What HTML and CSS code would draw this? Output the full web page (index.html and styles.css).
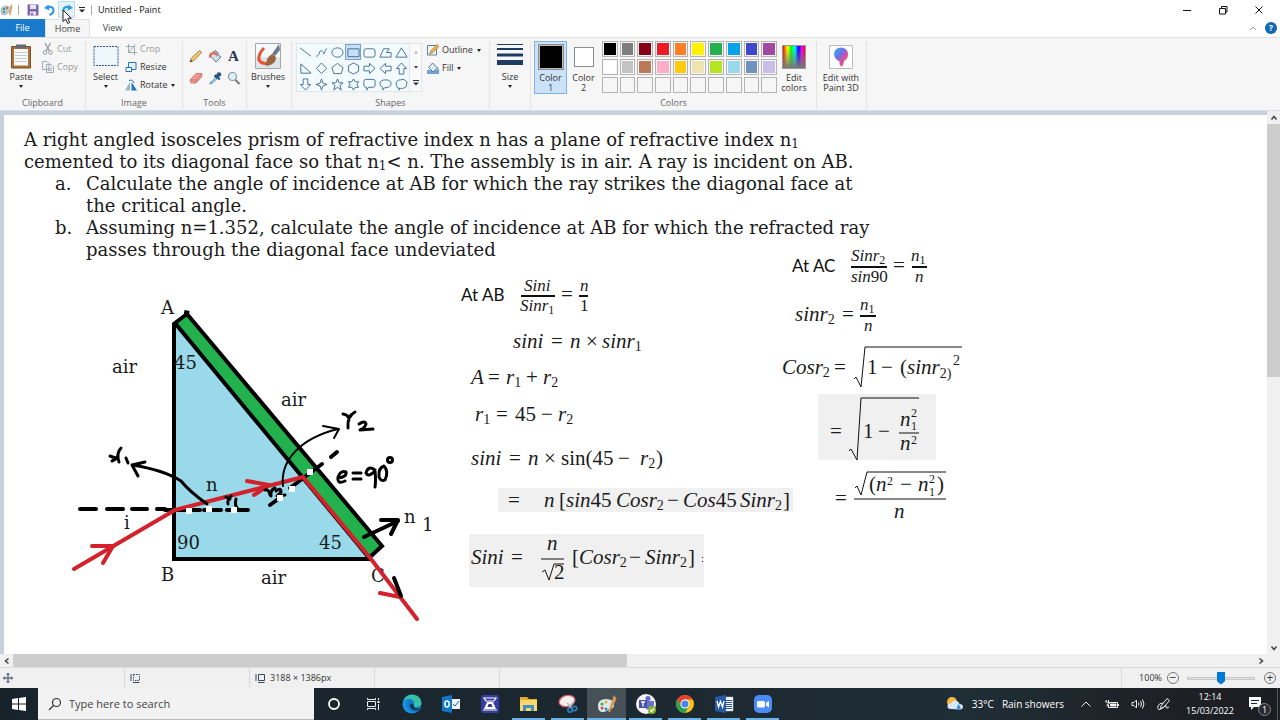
FILE: index.html
```html
<!DOCTYPE html>
<html lang="en">
<head>
<meta charset="utf-8">
<title>Untitled - Paint</title>
<link rel="stylesheet" href="styles.css">
</head>
<body>
<header class="titlebar">
  <svg class="app-icon" viewBox="0 0 14 14"><path d="M1 8Q1 3 6 3Q11 3 11 7Q11 10 8 9Q7 12 4 12Q1 12 1 8Z" fill="#b9cdd4" stroke="#8aa5b0" stroke-width=".6"/><circle cx="4" cy="6" r="1.2" fill="#3aa04a"/><circle cx="7" cy="5" r="1.1" fill="#d84b3a"/><circle cx="4" cy="9" r="1.1" fill="#3b7fd0"/><path d="M11 1L12.500 3L10.500 12L9 12Z" fill="#e0a050"/></svg>
  <span class="bar"></span>
  <button class="qa" aria-label="Save"><svg viewBox="0 0 12 12"><path d="M.5.500H11.500V11.500H.5Z" fill="#7f67ab"/><path d="M3 1H9V5H3ZM3 7.500H9V11H3Z" fill="#e9e4f4"/><path d="M4 9H6V11H4Z" fill="#7f67ab"/></svg></button>
  <button class="qa" aria-label="Undo"><svg viewBox="0 0 12 12"><path d="M3 3.500Q9.500 1.500 9.500 6.500Q9.500 9.500 5.500 11" fill="none" stroke="#2f9be0" stroke-width="2.200"/><path d="M0 4L4.500 .500L5.500 6.500Z" fill="#2f9be0"/></svg></button>
  <button class="qa hot" aria-label="Redo"><svg viewBox="0 0 12 12"><path d="M9 3.500Q2.500 1.500 2.500 6.500Q2.500 9.500 6.500 11" fill="none" stroke="#2f9be0" stroke-width="2.200"/><path d="M12 4L7.500 .500L6.500 6.500Z" fill="#2f9be0"/></svg></button>
  <button class="qa more" aria-label="Customize toolbar"><svg viewBox="0 0 6 6"><path d="M0 .5H6" stroke="#222"/><path d="M0 2.500H6L3 5.500Z" fill="#222"/></svg></button>
  <span class="bar"></span>
  <h1 class="title">Untitled - Paint</h1>
  <div class="window-buttons">
    <button aria-label="Minimize"><svg viewBox="0 0 10 10"><path d="M1 5.500H9" stroke="#111"/></svg></button>
    <button aria-label="Restore"><svg viewBox="0 0 10 10"><path d="M1.500 3.500H7.500V9H1.500ZM3.500 3V1.500H9V7H7.500" fill="none" stroke="#111"/></svg></button>
    <button aria-label="Close"><svg viewBox="0 0 10 10"><path d="M1.500 1.500L8.500 8.500M8.500 1.500L1.500 8.500" stroke="#111"/></svg></button>
  </div>
  <svg class="cursor" viewBox="0 0 11 16"><path d="M1 1V12.500L3.700 10L5.700 14.500L7.700 13.500L5.800 9.300H9.300Z" fill="#fff" stroke="#222"/></svg>
</header>

<nav class="tabs">
  <button class="tab file">File</button>
  <button class="tab current">Home</button>
  <button class="tab">View</button>
  <div class="tabs-end">
    <svg viewBox="0 0 8 6"><path d="M1 5L4 2L7 5" fill="none" stroke="#999"/></svg>
    <button class="help" aria-label="Help">?</button>
  </div>
</nav>

<section class="ribbon">
  <div class="group g-clipboard">
    <div class="tools">
      <button class="big"><svg viewBox="0 0 26 26"><path d="M3.500 3.500H22.500V25H3.500Z" fill="#a87238" stroke="#75502b"/><path d="M6 6H20V22.500H6Z" fill="#f9f9f7"/><path d="M8 1.500H18V5.500H8Z" fill="#66696c"/><path d="M7 9.500H19M7 12.500H19M7 15.500H19M7 18.500H19" stroke="#c3cad0"/></svg>Paste<i class="drop"></i></button>
      <div class="small-list two">
        <button class="small off"><svg viewBox="0 0 12 12"><path d="M3 0L7.500 8M8.500 0L4 8" stroke="#8e99a6" stroke-width="1.300"/><circle cx="3" cy="9.500" r="1.800" fill="none" stroke="#8e99a6"/><circle cx="8.500" cy="9.500" r="1.800" fill="none" stroke="#8e99a6"/></svg>Cut</button>
        <button class="small off"><svg viewBox="0 0 12 12"><path d="M.5.500H5L7 2.500V8.500H.5ZM4.500 3.500H9L11.500 6V11.500H4.500Z" fill="#eef1f5" stroke="#a3adb8"/><path d="M6 7.500H10M6 9.500H10" stroke="#a3adb8"/></svg>Copy</button>
      </div>
    </div>
    <h2>Clipboard</h2>
  </div>
  <div class="group g-image">
    <div class="tools">
      <button class="big"><svg viewBox="0 0 26 26"><path d="M1 3.500H25V22.500H1Z" fill="#f0f7fc" stroke="#2b5a92" stroke-dasharray="2 1"/></svg>Select<i class="drop"></i></button>
      <div class="small-list">
        <button class="small off"><svg viewBox="0 0 12 12"><path d="M3.500 1V9.500H12M1 3.500H9.500V12M3.500 9.500L10.500 1.500" fill="none" stroke="#a0a8b2"/></svg>Crop</button>
        <button class="small"><svg viewBox="0 0 12 12"><path d="M3.500 1.500H11V8.500H3.500Z" fill="#e7f2fb" stroke="#2673b8"/><path d="M1 6.500H6.500V10.500H1Z" fill="#fff" stroke="#2673b8"/></svg>Resize</button>
        <button class="small"><svg viewBox="0 0 12 12"><path d="M5 3L5 11.500H0Z" fill="#9fb4c8"/><path d="M6.500 3L12 11.500H6.500Z" fill="#1878c4"/><path d="M4 1.500Q8 0 9 4" fill="none" stroke="#2673b8"/></svg>Rotate<i class="drop"></i></button>
      </div>
    </div>
    <h2>Image</h2>
  </div>
  <div class="group g-tools">
    <div class="tools tool-grid">
      <button aria-label="Pencil"><svg viewBox="0 0 14 14"><path d="M1 13L2.500 9L10.500 1.500L12.500 3.500L5 11.500Z" fill="#f3c968" stroke="#8b6a33" stroke-width=".8"/><path d="M1 13L1.800 10.800L3.300 12.300Z" fill="#333"/></svg></button>
      <button aria-label="Fill with color"><svg viewBox="0 0 14 14"><path d="M6 2L13 8L8 13L2.500 7Z" fill="#d5e1ea" stroke="#5f7c94"/><path d="M1 9Q0 3 6 3Q10 4 10 8Q6 4 3.500 6Q3 9 1 9Z" fill="#e06e55"/><path d="M7 1L11 5" stroke="#5f7c94"/></svg></button>
      <button class="letter" aria-label="Text">A</button>
      <button aria-label="Eraser"><svg viewBox="0 0 14 14"><path d="M1 9L7 2.500H13L12.500 6L7 12H2Z" fill="#ef9a95" stroke="#c86a68" stroke-width=".8"/><path d="M1 9H7L13 3M7 9V12" fill="none" stroke="#c86a68" stroke-width=".7"/></svg></button>
      <button aria-label="Color picker"><svg viewBox="0 0 14 14"><path d="M1.500 12.500L8 6L9.500 7.500L3 13Z" fill="#a7d2ef" stroke="#4c85ab" stroke-width=".8"/><path d="M6.500 4.500L8 3L11 6L12.500 8L11 9L5.800 5.500Z" fill="#23517e"/><circle cx="11" cy="3.500" r="2.200" fill="#23517e"/></svg></button>
      <button aria-label="Magnifier"><svg viewBox="0 0 14 14"><path d="M8.500 9L12.500 13" stroke="#777" stroke-width="2"/><circle cx="5.500" cy="5.500" r="4" fill="#dff0fb" stroke="#8a97a4" stroke-width="1.200"/></svg></button>
    </div>
    <h2>Tools</h2>
  </div>
  <div class="group g-brush">
    <div class="tools">
      <button class="big"><svg viewBox="0 0 26 26"><path d="M.5.500H25.500V25.500H.5Z" fill="#f7fafc" stroke="#a5a9ad"/><path d="M1 14H25V25H1Z" fill="#dde4ea"/><path d="M9 5Q3 11 4 17Q7 22 14 20" fill="none" stroke="#e4572c" stroke-width="3"/><path d="M24 1L17 11L20 13L25 7Z" fill="#6a7b90"/><path d="M17 11L21 14Q21 22 11 23Q11 14 17 11Z" fill="#9a643c"/></svg>Brushes<i class="drop"></i></button>
    </div>
  </div>
  <div class="group g-shapes">
    <div class="tools">
      <div class="shape-box">
        <div class="shape-grid">
          <button aria-label="Line"><svg viewBox="0 0 14 14"><path d="M1 2L13 11"/></svg></button>
          <button aria-label="Curve"><svg viewBox="0 0 14 14"><path d="M1 11C6 11 4 4 7 5S9 10 10 8S11 3 13 3"/></svg></button>
          <button aria-label="Oval"><svg viewBox="0 0 14 14"><ellipse cx="7" cy="7" rx="6" ry="5"/></svg></button>
          <button class="picked" aria-label="Rectangle"><svg viewBox="0 0 14 14"><path d="M1 3H13V11.500H1Z"/></svg></button>
          <button aria-label="Rounded rectangle"><svg viewBox="0 0 14 14"><rect x="1" y="3" width="12" height="9" rx="2.500"/></svg></button>
          <button aria-label="Polygon"><svg viewBox="0 0 14 14"><path d="M1 12L5 3H11L8 7H13V12Z"/></svg></button>
          <button aria-label="Triangle"><svg viewBox="0 0 14 14"><path d="M7 2L13 12H1Z"/></svg></button>
          <button aria-label="Right triangle"><svg viewBox="0 0 14 14"><path d="M2 2V12H13Z"/></svg></button>
          <button aria-label="Diamond"><svg viewBox="0 0 14 14"><path d="M7 1L12.500 7L7 12.500L1.500 7Z"/></svg></button>
          <button aria-label="Pentagon"><svg viewBox="0 0 14 14"><path d="M7 1.500L13 6L11 12.500H3L1 6Z"/></svg></button>
          <button aria-label="Hexagon"><svg viewBox="0 0 14 14"><path d="M7 1L12.500 4V10L7 13L1.500 10V4Z"/></svg></button>
          <button aria-label="Right arrow"><svg viewBox="0 0 14 14"><path d="M1 4.500H7V1.500L13 7L7 12.500V9.500H1Z"/></svg></button>
          <button aria-label="Left arrow"><svg viewBox="0 0 14 14"><path d="M13 4.500H7V1.500L1 7L7 12.500V9.500H13Z"/></svg></button>
          <button aria-label="Up arrow"><svg viewBox="0 0 14 14"><path d="M4.500 13V7H1.500L7 1L12.500 7H9.500V13Z"/></svg></button>
          <button aria-label="Down arrow"><svg viewBox="0 0 14 14"><path d="M4.500 1V7H1.500L7 13L12.500 7H9.500V1Z"/></svg></button>
          <button aria-label="Four-point star"><svg viewBox="0 0 14 14"><path d="M7 1L8.500 5.500L13 7L8.500 8.500L7 13L5.500 8.500L1 7L5.500 5.500Z"/></svg></button>
          <button aria-label="Five-point star"><svg viewBox="0 0 14 14"><path d="M7 1L8.700 5.200H13L9.600 8L11 13L7 10L3 13L4.400 8L1 5.200H5.300Z"/></svg></button>
          <button aria-label="Six-point star"><svg viewBox="0 0 14 14"><path d="M7 1L8.800 4H12.500L10.700 7L12.500 10H8.800L7 13L5.200 10H1.500L3.300 7L1.500 4H5.200Z"/></svg></button>
          <button aria-label="Rounded callout"><svg viewBox="0 0 14 14"><path d="M3 1.500H11Q13 1.500 13 3.500V8Q13 10 11 10H6L4 13V10H3Q1 10 1 8V3.500Q1 1.500 3 1.500Z"/></svg></button>
          <button aria-label="Oval callout"><svg viewBox="0 0 14 14"><path d="M4 13V10Q1 9 1 6Q1 2 7 2Q13 2 13 6Q13 10.500 6 10.500Z"/></svg></button>
          <button aria-label="Cloud callout"><svg viewBox="0 0 14 14"><path d="M4 13L5 11Q1 11 2 8Q0 6 2 4Q3 1.500 6 2Q9 .5 11 2.500Q14 4 12.500 7Q13 10 10 10.500Q8 12 6 11Z"/></svg></button>
        </div>
        <div class="shape-scroll">
          <button aria-label="Scroll up"><svg viewBox="0 0 6 6"><path d="M1 4.500H5L3 2Z" fill="#aaa"/></svg></button>
          <button aria-label="Scroll down"><svg viewBox="0 0 6 6"><path d="M1 2H5L3 4.500Z" fill="#333"/></svg></button>
          <button aria-label="All shapes"><svg viewBox="0 0 6 6"><path d="M0 .5H6" stroke="#333"/><path d="M0 2.500H6L3 5.500Z" fill="#333"/></svg></button>
        </div>
      </div>
      <div class="small-list two">
        <button class="small"><svg viewBox="0 0 12 12"><path d="M.5 1.500H9.500V11H.5Z" fill="#f4f8fb" stroke="#5d7f9d"/><path d="M2.500 10L4 6.500L10 .5L12 2.500L6 8.500Z" fill="#efb34f" stroke="#8b6a33" stroke-width=".6"/></svg>Outline<i class="drop"></i></button>
        <button class="small"><svg viewBox="0 0 12 12"><path d="M0 8H12V12H0Z" fill="#6fa3d4"/><path d="M5.500 1L10.500 6L6 10L1.500 5.500Z" fill="#dce9f3" stroke="#5d7f9d"/><path d="M10 5Q12.500 7 11 9Z" fill="#2f6aa5"/></svg>Fill<i class="drop"></i></button>
      </div>
    </div>
    <h2>Shapes</h2>
  </div>
  <div class="group g-size">
    <div class="tools">
      <button class="big"><svg viewBox="0 0 26 26"><path d="M0 1.500H26" stroke="#1f3c64"/><path d="M0 6H26" stroke="#1f3c64" stroke-width="2"/><path d="M0 12H26" stroke="#1f3c64" stroke-width="3"/><path d="M0 19.500H26" stroke="#1f3c64" stroke-width="5"/></svg>Size<i class="drop"></i></button>
    </div>
  </div>
  <div class="group g-colors">
    <div class="tools">
      <button class="color-pick chosen"><span class="well"><span class="swatch first"></span></span>Color<br>1</button>
      <button class="color-pick"><span class="well"><span class="swatch second"></span></span>Color<br>2</button>
      <div class="palette">
        <button class="black" aria-label="Black"></button><button class="gray" aria-label="Gray"></button><button class="maroon" aria-label="Dark red"></button><button class="red" aria-label="Red"></button><button class="orange" aria-label="Orange"></button><button class="yellow" aria-label="Yellow"></button><button class="green" aria-label="Green"></button><button class="turquoise" aria-label="Turquoise"></button><button class="indigo" aria-label="Indigo"></button><button class="purple" aria-label="Purple"></button>
        <button class="white" aria-label="White"></button><button class="silver" aria-label="Light gray"></button><button class="brown" aria-label="Brown"></button><button class="rose" aria-label="Rose"></button><button class="gold" aria-label="Gold"></button><button class="cream" aria-label="Light yellow"></button><button class="lime" aria-label="Lime"></button><button class="sky" aria-label="Light turquoise"></button><button class="slate" aria-label="Blue gray"></button><button class="lavender" aria-label="Lavender"></button>
        <button aria-label="Custom 1"></button><button aria-label="Custom 2"></button><button aria-label="Custom 3"></button><button aria-label="Custom 4"></button><button aria-label="Custom 5"></button><button aria-label="Custom 6"></button><button aria-label="Custom 7"></button><button aria-label="Custom 8"></button><button aria-label="Custom 9"></button><button aria-label="Custom 10"></button>
      </div>
      <button class="color-pick edit"><span class="well"><span class="rainbow"></span></span>Edit<br>colors</button>
    </div>
    <h2>Colors</h2>
  </div>
  <div class="group g-3d">
    <div class="tools">
      <button class="color-pick wide"><span class="well"><svg viewBox="0 0 24 24"><defs><linearGradient id="drop3d" x1="0" y1="0" x2="1" y2="1"><stop offset="0" stop-color="#25b8f0"/><stop offset=".4" stop-color="#6a73e6"/><stop offset=".65" stop-color="#e04aa0"/><stop offset="1" stop-color="#f7943c"/></linearGradient></defs><path d="M.5.500H23.500V23.500H.5Z" fill="#fff" stroke="#bbb"/><path d="M12 2.500Q19 3 19 9.500Q19 14 15 16Q14.500 21 12.500 21.500Q10.500 21 10.500 16.500Q5 14 5 9Q5.500 3 12 2.500Z" fill="url(#drop3d)"/></svg></span>Edit with<br>Paint 3D</button>
    </div>
  </div>
</section>

<main class="workspace">
  <div class="canvas">
    <article class="problem">
      <p>A right angled isosceles prism of refractive index n has a plane of refractive index n<small>1</small><br>cemented to its diagonal face so that n<small>1</small>&lt; n. The assembly is in air. A ray is incident on AB.</p>
      <ol>
        <li><span>Calculate the angle of incidence at AB for which the ray strikes the diagonal face at<br>the critical angle.</span></li>
        <li><span>Assuming n=1.352, calculate the angle of incidence at AB for which the refracted ray<br>passes through the diagonal face undeviated</span></li>
      </ol>
    </article>

    <svg class="drawing" width="3188" height="1386" viewBox="4 115 3188 1386">
      <g class="prism">
        <path d="M174 323V559H370Z"/>
        <path d="M175 323L187 314L382 546L369 559Z"/>
        <path d="M184 313L189 314"/>
        <path d="M187 314L175 323L370 559H174V323M187 314L382 546L369 558"/>
      </g>
      <g class="dashes">
        <path d="M80 509H96M107 509H123M132 509H147M157 509H165M165 510H200M204 510H221M227 510H248"/>
        <path d="M270 505L281 497M290 488L322 464M331 457L337 452"/>
      </g>
      <g class="label">
        <text x="161" y="314">A</text><text x="112" y="373">air</text><text x="174" y="369">45</text><text x="281" y="406">air</text>
        <text x="206" y="491">n</text><text x="124" y="529">i</text><text x="177" y="549">90</text><text x="319" y="549">45</text>
        <text x="161" y="581">B</text><text x="261" y="584">air</text><text x="371" y="582">C</text><text x="404" y="523">n</text><text x="422" y="531">1</text>
      </g>
      <g class="ray">
        <path d="M74 569L175 510L303 477L371 559L417 619"/>
        <path d="M92 546L113 546L103 563M247 481L269 485L254 495M380 593L400 597"/>
      </g>
      <g class="ink">
        <path d="M110 456L118 459M121 448Q116 453 119 462M112 461Q115 460 118 456M126 458L128 463"/>
        <path d="M145 462L132 465L138 476M132 465Q164 470 181 481Q190 492 207 504"/>
        <path d="M226 497L230 499M231 496Q227 500 228 504M236 499Q234 508 240 510"/>
        <path d="M265 490Q269 489 270 495M275 488Q270 490 271 496M276 491Q281 487 281 492L277 496L285 495"/>
        <path d="M283 486C280 460 301 438 338 429M323 426L339 429L334 438" stroke-width="2"/>
        <path d="M343 414Q349 415 349 420M355 412Q347 416 348 428M359 424Q365 420 366 424Q365 428 360 430L373 429"/>
        <path d="M338 478Q347 477 346 472Q341 470 338 477Q337 485 345 481M353 473H361M353 479H361M375 470Q368 465 366 473Q368 478 375 471Q376 481 375 487M384 466Q378 468 379 477Q381 482 385 480Q389 471 384 466Z"/>
        <circle cx="390" cy="460" r="2.500"/>
        <path d="M364 537L398 521M381 520H398L391 534M394 578L401 596" stroke-width="4"/>
      </g>
      <path class="handles" d="M186 508h6v6h-6ZM206 506h6v6h-6ZM231 507h6v6h-6ZM277 495h6v6h-6ZM289 486h6v6h-6ZM307 469h6v6h-6Z"/>

      <g class="patch"><path d="M498 488H793V512H498ZM469 534H704V587H469ZM818 394H936V460H818Z"/></g>
      <g class="plain"><text x="461" y="301">At AB</text><text x="792" y="272">At AC</text></g>

      <g class="math">
        <text class="frac" x="524" y="291">Sini</text><text class="frac" x="520" y="311">Sinr<tspan class="sub" dy="3">1</tspan></text><text x="561" y="301" class="op">=</text>
        <text class="frac" x="580" y="291">n</text><text class="frac up" x="580" y="311">1</text>

        <text x="513" y="348">sini</text><text class="op" x="551" y="348">=</text><text x="570" y="348">n</text><text class="op" x="586" y="348">×</text><text x="602" y="348">sinr<tspan class="sub" dy="3">1</tspan></text>

        <text x="471" y="384">A</text><text class="op" x="488" y="384">=</text><text x="506" y="384">r<tspan class="sub" dy="3">1</tspan></text><text class="op" x="526" y="384">+</text><text x="543" y="384">r<tspan class="sub" dy="3">2</tspan></text>

        <text x="475" y="421">r<tspan class="sub" dy="3">1</tspan></text><text class="op" x="496" y="421">=</text><text class="up" x="515" y="421">45</text><text class="op" x="541" y="421">−</text><text x="558" y="421">r<tspan class="sub" dy="3">2</tspan></text>

        <text x="471" y="465">sini</text><text class="op" x="509" y="465">=</text><text x="528" y="465">n</text><text class="op" x="544" y="465">×</text><text class="up" x="561" y="465">sin(45</text><text class="op" x="618" y="465">−</text><text x="640" y="465">r<tspan class="sub" dy="3">2</tspan></text><text class="up" x="656" y="465">)</text>

        <text class="op" x="508" y="507">=</text><text x="544" y="507">n</text><text x="559" y="507"><tspan class="up">[</tspan>sin<tspan class="up">45</tspan></text><text x="616" y="507">Cosr<tspan class="sub" dy="3">2</tspan></text><text class="op" x="667" y="507">−</text><text x="683" y="507">Cos<tspan class="up">45</tspan></text><text x="740" y="507">Sinr<tspan class="sub" dy="3">2</tspan></text><text class="up" x="783" y="507">]</text>

        <text x="471" y="564">Sini</text><text class="op" x="511" y="564">=</text><text x="547" y="550">n</text><text class="up" x="554" y="579">2</text><text class="up" x="572" y="564">[</text><text x="579" y="564">Cosr<tspan class="sub" dy="3">2</tspan></text><text class="op" x="629" y="564">−</text><text x="645" y="564">Sinr<tspan class="sub" dy="3">2</tspan></text><text class="up" x="688" y="564">]</text>

        <text class="frac" x="851" y="261">Sinr<tspan class="sub" dy="3">2</tspan></text><text class="frac" x="851" y="282">sin<tspan class="up">90</tspan></text><text class="op" x="893" y="272">=</text><text class="frac" x="911" y="261">n<tspan class="sub" dy="3">1</tspan></text><text class="frac" x="915" y="282">n</text>

        <text x="795" y="321">sinr<tspan class="sub" dy="3">2</tspan></text><text class="op" x="842" y="321">=</text><text class="frac" x="860" y="310">n<tspan class="sub" dy="3">1</tspan></text><text class="frac" x="864" y="331">n</text>

        <text x="782" y="374">Cosr<tspan class="sub" dy="3">2</tspan></text><text class="op" x="834" y="374">=</text><text class="up" x="867" y="374">1</text><text class="op" x="881" y="374">−</text><text x="900" y="374"><tspan class="up">(</tspan>sinr<tspan class="sub" dy="4">2)</tspan></text><text class="sub" x="953" y="365">2</text>

        <text class="op" x="830" y="438">=</text><text class="up" x="863" y="438">1</text><text class="op" x="878" y="438">−</text><text x="900" y="426">n</text><text class="tiny" x="911" y="417">2</text><text class="tiny" x="911" y="430">1</text><text x="900" y="450">n</text><text class="tiny" x="911" y="444">2</text>

        <text class="op" x="835" y="505">=</text><text class="up" x="869" y="491">(</text><text x="876" y="491">n</text><text class="tiny" x="887" y="485">2</text><text class="op" x="900" y="491">−</text><text x="918" y="491">n</text><text class="tiny" x="929" y="483">2</text><text class="tiny" x="929" y="496">1</text><text class="up" x="937" y="491">)</text><text x="894" y="518">n</text>
      </g>
      <g class="rules">
        <path d="M521 296H555M579 296H588M851 267H887M912 267H927M860 316H876" stroke-width="2"/>
        <path d="M541 559H564M899 433H919M854 499H946"/>
        <path d="M542 572L545 570L549 580L554 564H564M854 379L856 377L861 387L865 347H962M849 451L851 449L857 460L861 398H919M855 488L857 486L861 495L867 472H946M702.500 557V558M702.500 561V562"/>
      </g>
    </svg>
  </div>
  <div class="vscroll">
    <button aria-label="Scroll up"><svg viewBox="0 0 8 8"><path d="M1.500 5.500L4 2.500L6.500 5.500"/></svg></button>
    <div class="lane"><div class="thumb"></div></div>
    <button aria-label="Scroll down"><svg viewBox="0 0 8 8"><path d="M1.500 2.500L4 5.500L6.500 2.500"/></svg></button>
  </div>
  <div class="hscroll">
    <button aria-label="Scroll left"><svg viewBox="0 0 8 8"><path d="M5.500 1.500L2.500 4L5.500 6.500"/></svg></button>
    <div class="lane"><div class="thumb"></div></div>
    <button aria-label="Scroll right"><svg viewBox="0 0 8 8"><path d="M2.500 1.500L5.500 4L2.500 6.500"/></svg></button>
  </div>
</main>

<footer class="status">
  <div class="cell"><svg viewBox="0 0 10 10"><path d="M5 0V10M0 5H10M3.500 2L5 .5L6.500 2M3.500 8L5 9.500L6.500 8M2 3.500L.5 5L2 6.500M8 3.500L9.500 5L8 6.500"/></svg></div>
  <div class="cell"><svg viewBox="0 0 10 10"><path d="M3.500 1.500H9.500V7.500H3.500Z" stroke-dasharray="1.500 1"/><path d="M1 1V8M3 9.500H9.500"/></svg></div>
  <div class="cell"><svg viewBox="0 0 10 10"><path d="M3.500 1.500H9.500V7.500H3.500Z"/><path d="M1 1V8M3 9.500H9.500"/></svg>3188 × 1386px</div>
  <div class="cell"></div>
  <div class="zoom">
    <label for="zoom">100%</label>
    <button aria-label="Zoom out">−</button>
    <input id="zoom" type="range" min="0" max="100" value="50">
    <button aria-label="Zoom in">+</button>
  </div>
</footer>

<footer class="taskbar">
  <button class="task start" aria-label="Start"><svg viewBox="0 0 14 14"><path d="M0 2L6 1V6.500H0ZM7 1L14 0V6.500H7ZM0 7.500H6V13L0 12ZM7 7.500H14V14L7 13Z" fill="#fff"/></svg></button>
  <label class="search"><svg viewBox="0 0 14 14"><circle cx="8.500" cy="5.500" r="4" fill="none" stroke="#333" stroke-width="1.200"/><path d="M5.500 8.500L1 13" stroke="#333" stroke-width="1.200"/></svg><input type="text" placeholder="Type here to search" aria-label="Search"></label>
  <button class="task" aria-label="Cortana"><svg viewBox="0 0 20 20"><circle cx="10" cy="10" r="5" fill="none" stroke="#fff" stroke-width="1.800"/></svg></button>
  <button class="task" aria-label="Task view"><svg viewBox="0 0 20 20"><path d="M4.500 7.500H12.500V12.500H4.500ZM4.500 4V5.500H12.500V4M4.500 16V14.500H12.500V16M15.500 4V6M15.500 10V16" fill="none" stroke="#eee"/><path d="M14.500 7H16.500V9H14.500Z" fill="#fff"/></svg></button>
  <button class="task" aria-label="Edge"><svg viewBox="0 0 20 20"><circle cx="10" cy="10" r="9.500" fill="#1878c8"/><path d="M1 8Q3 .5 10 .5Q19 1 19.500 9Q19 13 14.500 13Q11.500 13 12 11Q13 6 8 5Q3 4 1 8Z" fill="#35c1a5"/><path d="M1 8Q3 4 8 5Q3 7 5 13Q7 18 13 18Q6 21 2 15Q0 11 1 8Z" fill="#1595e0"/><path d="M12 11Q8 8 8 12Q9 17 16 16Q18 15 18.500 14Q16 15 13 14Q11 13 12 11Z" fill="#14344e"/></svg></button>
  <button class="task" aria-label="Outlook"><svg viewBox="0 0 20 20"><path d="M10 5H19V15H10Z" fill="#eef5fb"/><path d="M12 10L14 12L18 7" fill="none" stroke="#0f6cbd"/><path d="M1 3L11 1V19L1 17Z" fill="#0f78c8"/><ellipse cx="6" cy="10" rx="2.200" ry="3" fill="none" stroke="#fff" stroke-width="1.500"/></svg></button>
  <button class="task" aria-label="Scanner"><svg viewBox="0 0 20 20"><rect x="1" y="1" width="18" height="18" rx="2" fill="#343da0"/><path d="M4 4H16L14 7H6Z" fill="#343da0" stroke="#fff" stroke-width="1.200"/><path d="M7 8H13L16 15H4Z" fill="#fff"/><path d="M8.500 10H11.500L12.500 13H7.500Z" fill="#343da0"/><path d="M3 16H17" stroke="#fff"/></svg></button>
  <button class="task open" aria-label="File Explorer"><svg viewBox="0 0 20 20"><path d="M1 3H8L10 5H18V17H1Z" fill="#e8aa32"/><path d="M1 6H18V17H1Z" fill="#fbd769"/><path d="M4 11H15V17H12V14H7V17H4Z" fill="#3f8fc5"/></svg></button>
  <button class="task open" aria-label="Snipping Tool"><svg viewBox="0 0 20 20"><ellipse cx="9" cy="7" rx="8" ry="5.500" fill="#f8eeee" stroke="#d7626b" stroke-width="1.300" transform="rotate(-15 9 7)"/><path d="M9 9L14 14M16 7L11 14" stroke="#b8bdc2" stroke-width="1.500"/><circle cx="12" cy="16" r="2.200" fill="none" stroke="#2c86c2" stroke-width="1.500"/><circle cx="16.500" cy="14.500" r="2.200" fill="none" stroke="#2c86c2" stroke-width="1.500"/></svg></button>
  <button class="task open active" aria-label="Paint"><svg viewBox="0 0 20 20"><path d="M1 12Q1 5 9 5Q17 5 17 11Q17 15 13 14Q10 18 6 18Q1 18 1 12Z" fill="#d9e9ee"/><circle cx="5" cy="10" r="1.600" fill="#49aa4a"/><circle cx="9" cy="8" r="1.500" fill="#e2ad32"/><circle cx="5" cy="14" r="1.500" fill="#d74b43"/><circle cx="9" cy="15" r="1.500" fill="#3488c7"/><path d="M17 1L19.500 5L13 18L11 18Z" fill="#d99a54"/></svg></button>
  <button class="task open" aria-label="Teams"><svg viewBox="0 0 20 20"><circle cx="10" cy="10" r="10" fill="#f4f4fa"/><circle cx="12" cy="4.500" r="2.500" fill="#6269c4"/><path d="M9 7H18V14Q15 17 10 15Z" fill="#6b72cc"/><path d="M3 6H11V14H3Z" fill="#4950a8"/><path d="M5 8H9M7 8V12.500" stroke="#fff" stroke-width="1.300"/><circle cx="16" cy="16" r="4" fill="#83b72b"/><path d="M14 16L15.500 17.500L18 14.500" fill="none" stroke="#fff" stroke-width="1.200"/></svg></button>
  <button class="task open" aria-label="Chrome"><svg viewBox="0 0 20 20"><circle cx="10" cy="10" r="9" fill="#fbc116"/><path d="M10 5.500H17.800A9 9 0 0 0 2.200 5.500L6 12Z" fill="#e34133"/><path d="M2.200 5.500A9 9 0 0 0 10 19L14 12.500L10 14L6 12Z" fill="#2ca04e"/><circle cx="10" cy="10" r="4.500" fill="#fff"/><circle cx="10" cy="10" r="3.500" fill="#4285f4"/></svg></button>
  <button class="task open" aria-label="Word"><svg viewBox="0 0 20 20"><path d="M10 3H19V17H10Z" fill="#f3f6fa" stroke="#b8c8df" stroke-width=".5"/><path d="M12 6.500H18M12 8.500H18M12 10.500H18M12 12.500H18M12 14.500H18" stroke="#2b579a"/><path d="M1 3L12 1V19L1 17Z" fill="#2b5aa8"/><path d="M3 7L4.500 13L6.500 7.500L8.500 13L10 7" fill="none" stroke="#fff" stroke-width="1.300"/></svg></button>
  <button class="task open" aria-label="Zoom"><svg viewBox="0 0 20 20"><rect x="1" y="1" width="18" height="18" rx="5" fill="#4a8cf7"/><rect x="4" y="7" width="8" height="6.500" rx="1.500" fill="#fff"/><path d="M13 9L16 7V13.500L13 11.500Z" fill="#fff"/></svg></button>
  <div class="tray">
    <button class="weather"><svg viewBox="0 0 18 16"><circle cx="6" cy="6" r="5" fill="#f5b83d"/><path d="M5 13Q1 13 1.500 9.500Q2 7 5 7.500Q7 3.500 11 5Q13 6 13.500 8Q17 8 17 11Q16.500 13.500 14 13.500Z" fill="#d5e8fa"/><path d="M12.500 8Q15.500 11.500 14 13.500Q12 15 11 13Q10.500 11 12.500 8Z" fill="#3e93e0"/></svg><span>33°C</span><span>Rain showers</span></button>
    <button aria-label="Hidden icons"><svg viewBox="0 0 14 14"><path d="M2.500 9.500L7 5L11.500 9.500"/></svg></button>
    <button aria-label="Battery"><svg viewBox="0 0 14 14"><path d="M4 5.500H12.500V10.500H3.500V8M13.500 7V9M1 3V5M3.500 3V5M.5 5H4V7H2.300V9.500"/><path d="M5.500 7H11V9H5.500Z" fill="#fff"/></svg></button>
    <button aria-label="Volume"><svg viewBox="0 0 14 14"><path d="M1 5.500H3L5.500 3V11L3 8.500H1ZM7.500 5.500Q8.500 7 7.500 8.500M9.500 4Q11.500 7 9.500 10M11.500 2.500Q14.500 7 11.500 11.500"/></svg></button>
    <button aria-label="Pen"><svg viewBox="0 0 14 14"><path d="M4 9L10 1.500L12.500 3.500L6.500 10.500L3.500 11.500ZM6 6Q2 6 1 9Q0 13 3 12.500Q7 10 8 9Q10 8 9 10.500Q9 12 12 10"/></svg></button>
    <button class="clock"><time>12:14</time><time>15/03/2022</time></button>
    <button class="notes" aria-label="1 notification"><svg viewBox="0 0 18 18"><path d="M1 2H13V12H6L3 15V12H1Z" fill="#fff" stroke="none"/><path d="M3 5.500H11M3 8.500H9" stroke="#222"/></svg><span class="count">1</span></button>
  </div>
</footer>
</body>
</html>
```
FILE: styles.css
```css
* { box-sizing: border-box; }
body {
  margin: 0;
  height: 100vh;
  display: flex;
  flex-direction: column;
  overflow: hidden;
  font: 9px/10px "Open Sans", "Noto Sans", sans-serif;
  color: #333;
  background: #fff;
}
button {
  font: inherit;
  color: inherit;
  background: none;
  border: 0;
  padding: 0;
  margin: 0;
}
svg { display: block; flex: none; }
h1, h2 { font: inherit; margin: 0; }

/* Title bar */
.titlebar { position: relative; display: flex; align-items: center; height: 19px; flex: none; }
.app-icon { width: 14px; height: 14px; margin-right: 4px; }
.bar { width: 1px; height: 10px; background: #aaa; }
.qa { display: grid; place-items: center; width: 17px; height: 17px; }
.bar + .qa { margin-left: 5px; }
.qa svg { width: 12px; height: 12px; }
.qa.hot { background: #e5f3fd; border: 1px solid #b8dcf3; }
.qa.more { width: 14px; }
.qa.more svg { width: 6px; height: 6px; }
.qa.more + .bar { margin-left: 2px; }
.title { margin-left: 6px; color: #111; }
.window-buttons { display: flex; margin-left: auto; padding-right: 3px; }
.window-buttons button { width: 36px; height: 17px; display: grid; place-items: center; }
.window-buttons svg { width: 10px; height: 10px; }
.cursor { position: absolute; left: 62px; top: 9px; width: 11px; height: 16px; z-index: 3; }

/* Tabs */
.tabs { display: flex; height: 18px; flex: none; }
.tab { width: 45px; color: #444; }
.tab.file { background: #1979ca; color: #fff; }
.tab.current { background: #f6f6f6; border: 1px solid #dde1e6; border-bottom: 0; }
.tabs-end { margin-left: auto; display: flex; align-items: center; gap: 8px; padding-right: 3px; }
.tabs-end svg { width: 8px; height: 6px; }
.help { width: 12px; height: 12px; border-radius: 50%; background: #0d67b5; color: #fff; font-weight: 700; line-height: 12px; }

/* Ribbon */
.ribbon { display: flex; height: 74px; flex: none; background: #f6f6f6; border-top: 1px solid #dfe3e8; border-bottom: 1px solid #dcdfe3; }
.group { display: flex; flex-direction: column; flex: none; margin: 3px 0 1px; border-right: 1px solid #e2e4e6; }
.group h2 { height: 13px; line-height: 13px; text-align: center; color: #666; margin-top: auto; }
.tools { display: flex; }
.g-clipboard { width: 86px; }
.g-image { width: 97px; }
.g-tools { width: 64px; }
.g-brush { width: 45px; }
.g-shapes { width: 198px; }
.g-size { width: 41px; }
.g-colors { width: 286px; }
.g-3d { width: 50px; }
.big { display: flex; flex-direction: column; align-items: center; padding-top: 2px; width: 42px; }
.big svg { width: 26px; height: 26px; margin-bottom: 3px; }
.drop { width: 0; height: 0; border: 2px solid transparent; border-top: 3px solid #222; border-bottom: 0; }
.big .drop { margin-top: 3px; }
.small-list { display: flex; flex-direction: column; gap: 6px; padding-top: 2px; }
.small { display: flex; align-items: center; gap: 3px; height: 12px; }
.small svg { width: 12px; height: 12px; }
.small .drop { margin-left: 1px; }
.off { color: #9a9a9a; }
.g-image .big { width: 39px; }
.tool-grid { display: grid; grid-template-columns: repeat(3, 19px); grid-auto-rows: 22px; justify-content: center; padding-top: 4px; }
.tool-grid button { display: grid; place-items: center; }
.tool-grid svg { width: 14px; height: 14px; }
.letter { font: 700 15px/16px "Liberation Serif", serif; color: #243a5c; }
.g-shapes .tools { padding: 2px 0 0 4px; gap: 5px; }
.shape-box { display: flex; width: 126px; height: 49px; border: 1px solid #dfe6ec; background: #f4fbff; }
.shape-grid { display: grid; grid-template-columns: repeat(7, 16px); grid-auto-rows: 16px; }
.shape-grid button { display: grid; place-items: center; }
.shape-grid svg { width: 13px; height: 13px; fill: none; stroke: #3f6c94; stroke-width: 1; }
.shape-grid .picked { outline: 1px solid #73a3d6; outline-offset: -1px; background: #c8dff5; }
.shape-scroll { flex: 1; display: grid; border-left: 1px solid #dfe6ec; background: #f9fafb; }
.shape-scroll button { display: grid; place-items: center; }
.shape-scroll svg { width: 6px; height: 6px; }
.g-shapes .small-list { padding-top: 1px; }
.g-size .big { width: 40px; }

.g-colors .tools { padding-left: 3px; }
.color-pick { width: 33px; height: 53px; padding: 2px 0 0; }
.chosen { background: #cce2f9; outline: 1px solid #7fb2e5; outline-offset: -1px; }
.well { display: grid; place-items: center; height: 26px; margin-bottom: 3px; }
.well svg { width: 24px; height: 24px; }
.swatch { border: 1px solid #8c8c8c; box-shadow: inset 0 0 0 1px #fff; }
.swatch.first { width: 26px; height: 26px; background: #000; box-shadow: inset 0 0 0 1px #bbb; }
.swatch.second { width: 20px; height: 20px; background: #fff; }
.rainbow {
  width: 24px; height: 24px; border: 1px solid #999;
  background: linear-gradient(to top, #777 0, transparent 90%), linear-gradient(to right, #f00, #ff0 20%, #0f0 38%, #0ff 54%, #00f 70%, #f0f 86%, #f00);
}
.palette { display: grid; grid-template-columns: repeat(10, 1fr); grid-auto-rows: 16px; gap: 2px; width: 175px; height: 52px; margin-left: 2px; }
.palette button { border: 1px solid #b4b4b4; box-shadow: inset 0 0 0 1px #f6f6f6; }
.edit { width: 34px; }
.wide { width: 48px; }
.black { background: #000; } .gray { background: #7f7f7f; } .maroon { background: #880015; } .red { background: #ed1c24; } .orange { background: #ff7f27; }
.yellow { background: #fff200; } .green { background: #22b14c; } .turquoise { background: #00a2e8; } .indigo { background: #3f48cc; } .purple { background: #a349a4; }
.white { background: #fff; } .silver { background: #c3c3c3; } .brown { background: #b97a57; } .rose { background: #ffaec9; } .gold { background: #ffc90e; }
.cream { background: #efe4b0; } .lime { background: #b5e61d; } .sky { background: #99d9ea; } .slate { background: #7092be; } .lavender { background: #c8bfe7; }

/* Canvas and scroll bars */
.workspace { flex: 1; min-height: 0; display: grid; grid-template: 1fr 13px / 1fr 13px; background: #f0f0f0; }
.canvas { position: relative; overflow: hidden; background: #fff; border: solid #c9d0dd; border-width: 4px 0 0 4px; }
.problem { padding: 14px 20px; font: 18px/22px "DejaVu Serif", serif; color: #1a1a1a; white-space: nowrap; }
.problem p, .problem ol { margin: 0; }
.problem ol { list-style: none; padding-left: 31px; counter-reset: part; }
.problem li { display: grid; grid-template-columns: 31px auto; counter-increment: part; }
.problem li::before { content: counter(part, lower-alpha) "."; }
.problem small { font-size: 12px; line-height: 12px; vertical-align: -2px; }
.drawing { position: absolute; left: 0; top: 0; }
.drawing path { fill: none; }
.prism path { stroke: #000; stroke-width: 4; }
.prism path:nth-child(1) { fill: #99d9ea; stroke: none; }
.prism path:nth-child(2) { fill: #22b14c; stroke: none; }
.prism path:nth-child(3) { stroke-width: 6; }
.dashes { stroke: #000; stroke-width: 4; stroke-linecap: round; }
.label { font: 18px "DejaVu Serif", serif; fill: #1a1a1a; }
.ray { stroke: #d3222c; stroke-width: 4; stroke-linecap: round; stroke-linejoin: round; }
.ink { fill: none; stroke: #000; stroke-width: 3; stroke-linecap: round; stroke-linejoin: round; }
.drawing .handles { fill: #fff; }
.drawing .patch path { fill: #f0f0f0; }
.plain { font: 17px Lato, sans-serif; fill: #111; }
.math { font: italic 21px "Liberation Serif", serif; fill: #1a1a1a; }
.math .frac { font-size: 17px; }
.math .op, .math .up { font-style: normal; }
.math .sub { font-size: 14px; font-style: normal; }
.math .frac .sub { font-size: 12px; }
.math .tiny { font-size: 12px; font-style: normal; }
.rules { stroke: #111; stroke-width: 1; }
.vscroll, .hscroll { display: flex; }
.vscroll { flex-direction: column; }
.vscroll button, .hscroll button { width: 13px; height: 13px; display: grid; place-items: center; flex: none; }
.workspace .vscroll svg, .workspace .hscroll svg { width: 8px; height: 8px; fill: none; stroke: #444; stroke-width: 1.5; }
.lane { flex: 1; }
.thumb { background: #cdcdcd; }
.vscroll .thumb { height: 49%; }
.hscroll .thumb { width: 49.5%; height: 100%; }

/* Status bar */
.status { display: flex; height: 21px; flex: none; background: #f0f0f0; border-top: 1px solid #dadada; }
.cell { display: flex; align-items: center; gap: 5px; width: 125px; padding-left: 3px; border-right: 1px solid #d8d8d8; }
.cell svg { width: 10px; height: 10px; fill: none; stroke: #34495e; }
.cell + .cell { padding-left: 5px; }
.zoom { display: flex; align-items: center; margin-left: auto; padding: 0 4px 0 17px; border-left: 1px solid #d8d8d8; }
.zoom button { width: 12px; height: 12px; border: 1px solid #777; border-radius: 50%; line-height: 10px; font-size: 12px; }
.zoom label { margin-right: 5px; }
.zoom input { appearance: none; width: 68px; height: 14px; margin: 0 9px 0 8px; background: none; }
.zoom input::-webkit-slider-runnable-track { height: 3px; background: #e2e2e2; border: 1px solid #c8c8c8; }
.zoom input::-webkit-slider-thumb { appearance: none; width: 8px; height: 13px; margin-top: -6px; background: #0078d7; clip-path: polygon(0 0, 100% 0, 100% 75%, 50% 100%, 0 75%); }

/* Taskbar */
.taskbar { display: flex; height: 32px; flex: none; background: linear-gradient(to right, #18222a, #1d2a32 60%, #1f2e36 75%, #1e2126 90%, #1c1d22); color: #fff; }
.task { width: 39px; display: grid; place-items: center; }
.task svg { width: 20px; height: 20px; }
.task.start { width: 38px; }
.task.start svg { width: 14px; height: 14px; }
.search { display: flex; align-items: center; gap: 7px; width: 276px; padding-left: 10px; background: #f2f2f2; border-bottom: 1px solid #bbb; }
.search svg { width: 14px; height: 14px; }
.search input { flex: 1; min-width: 0; border: 0; background: none; padding: 0; font: 11px "Open Sans", sans-serif; }
.search input::placeholder { color: #444; opacity: 1; }
.open { box-shadow: inset 0 -2px #6cb4e8; background-clip: content-box; border: solid transparent; border-width: 0 3px; }
.open.active { background: #455057; border-width: 0; }
.tray { display: flex; align-items: center; margin-left: auto; padding-right: 6px; border-right: 1px solid #555; margin-right: 2px; }
.tray button { display: grid; place-items: center; width: 26px; height: 32px; }
.tray svg { width: 14px; height: 14px; fill: none; stroke: #eee; }
.tray .weather { display: flex; align-items: center; width: auto; gap: 8px; font-size: 10px; margin-right: 9px; }
.tray .weather svg { width: 18px; height: 16px; stroke: none; }
.tray .clock { width: 66px; display: flex; flex-direction: column; align-items: center; justify-content: center; gap: 4px; }
.tray .notes { position: relative; width: 28px; }
.tray .notes svg { width: 18px; height: 18px; }
.count { position: absolute; right: 0; bottom: 4px; width: 13px; height: 13px; border: 1px solid #888; border-radius: 50%; background: #2a2b30; line-height: 11px; text-align: center; }
```
